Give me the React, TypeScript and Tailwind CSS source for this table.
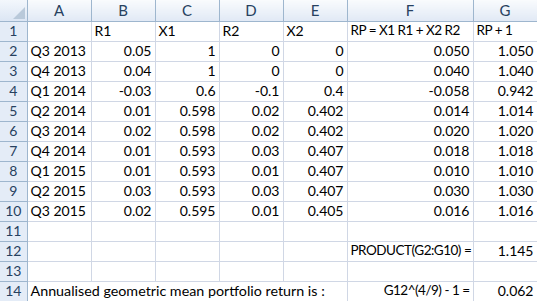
const cols = ['A', 'B', 'C', 'D', 'E', 'F', 'G'];

type Cell = { v: string; right?: boolean; tight?: boolean };

const l = (v: string, tight = false): Cell => ({ v, tight });
const r = (v: string, tight = false): Cell => ({ v, right: true, tight });
const e: Cell = { v: '' };

const rows: Cell[][] = [
    [e, l('R1'), l('X1'), l('R2'), l('X2'), l('RP = X1 R1 + X2 R2', true), l('RP + 1', true)],
    [l('Q3 2013'), r('0.05'), r('1'), r('0'), r('0'), r('0.050'), r('1.050')],
    [l('Q4 2013'), r('0.04'), r('1'), r('0'), r('0'), r('0.040'), r('1.040')],
    [l('Q1 2014'), r('-0.03'), r('0.6'), r('-0.1'), r('0.4'), r('-0.058'), r('0.942')],
    [l('Q2 2014'), r('0.01'), r('0.598'), r('0.02'), r('0.402'), r('0.014'), r('1.014')],
    [l('Q3 2014'), r('0.02'), r('0.598'), r('0.02'), r('0.402'), r('0.020'), r('1.020')],
    [l('Q4 2014'), r('0.01'), r('0.593'), r('0.03'), r('0.407'), r('0.018'), r('1.018')],
    [l('Q1 2015'), r('0.01'), r('0.593'), r('0.01'), r('0.407'), r('0.010'), r('1.010')],
    [l('Q2 2015'), r('0.03'), r('0.593'), r('0.03'), r('0.407'), r('0.030'), r('1.030')],
    [l('Q3 2015'), r('0.02'), r('0.595'), r('0.01'), r('0.405'), r('0.016'), r('1.016')],
    [e, e, e, e, e, e, e],
    [e, e, e, e, e, r('PRODUCT(G2:G10) =', true), r('1.145')],
    [e, e, e, e, e, e, e],
];

const cellCls = 'h-[20px] border-r border-b border-[#d0d7e5] px-[3px] whitespace-nowrap overflow-hidden leading-none';
const rowHead = 'h-[20px] p-0 border-r border-b border-[#9eb6ce] bg-[#e4ecf7] text-[#27415f] text-center leading-none';
const tightCls = 'text-[13.5px] tracking-[-0.5px]';

export default function App() {
    return (
        <div className="w-[537px] h-[301px] overflow-hidden bg-white" style={{ fontFamily: 'Lato, "Open Sans", sans-serif' }}>
            <table className="w-[537px] table-fixed border-collapse text-[14px] text-black">
                <colgroup>
                    <col className="w-[27px]" />
                    <col className="w-[64px]" />
                    <col className="w-[64px]" />
                    <col className="w-[64px]" />
                    <col className="w-[64px]" />
                    <col className="w-[64px]" />
                    <col className="w-[126px]" />
                    <col className="w-[64px]" />
                </colgroup>
                <thead>
                    <tr>
                        {/* corner */}
                        <th className="h-[21px] p-0 border-r border-b border-[#9eb6ce] bg-gradient-to-b from-[#f3f7fc] to-[#dce6f4] relative">
                            <svg className="absolute right-[2px] bottom-[2px]" width="12" height="12" viewBox="0 0 12 12">
                                <polygon points="12,0 12,12 0,12" fill="#b9c9da" />
                            </svg>
                        </th>
                        {cols.map((c) => (
                            <th
                                key={c}
                                className="h-[21px] p-0 border-r border-b border-[#9eb6ce] bg-gradient-to-b from-[#f9fbfd] to-[#e1e9f5] text-[#27415f] text-[15px] font-normal text-center leading-none"
                            >
                                {c}
                            </th>
                        ))}
                    </tr>
                </thead>
                <tbody>
                    {rows.map((row, i) => (
                        <tr key={i}>
                            <td className={rowHead}>{i + 1}</td>
                            {row.map((cell, j) => (
                                <td
                                    key={j}
                                    className={`${cellCls} ${cell.right ? 'text-right' : 'text-left'} ${cell.tight ? tightCls : ''}`}
                                >
                                    {cell.v}
                                </td>
                            ))}
                        </tr>
                    ))}
                    <tr>
                        <td className={rowHead}>14</td>
                        <td colSpan={5} className={`${cellCls} text-left text-[14.3px]`}>
                            Annualised geometric mean portfolio return is :
                        </td>
                        <td className={`${cellCls} text-right ${tightCls}`}>G12^(4/9) - 1 =</td>
                        <td className={`${cellCls} text-right`}>0.062</td>
                    </tr>
                </tbody>
            </table>
        </div>
    );
}
